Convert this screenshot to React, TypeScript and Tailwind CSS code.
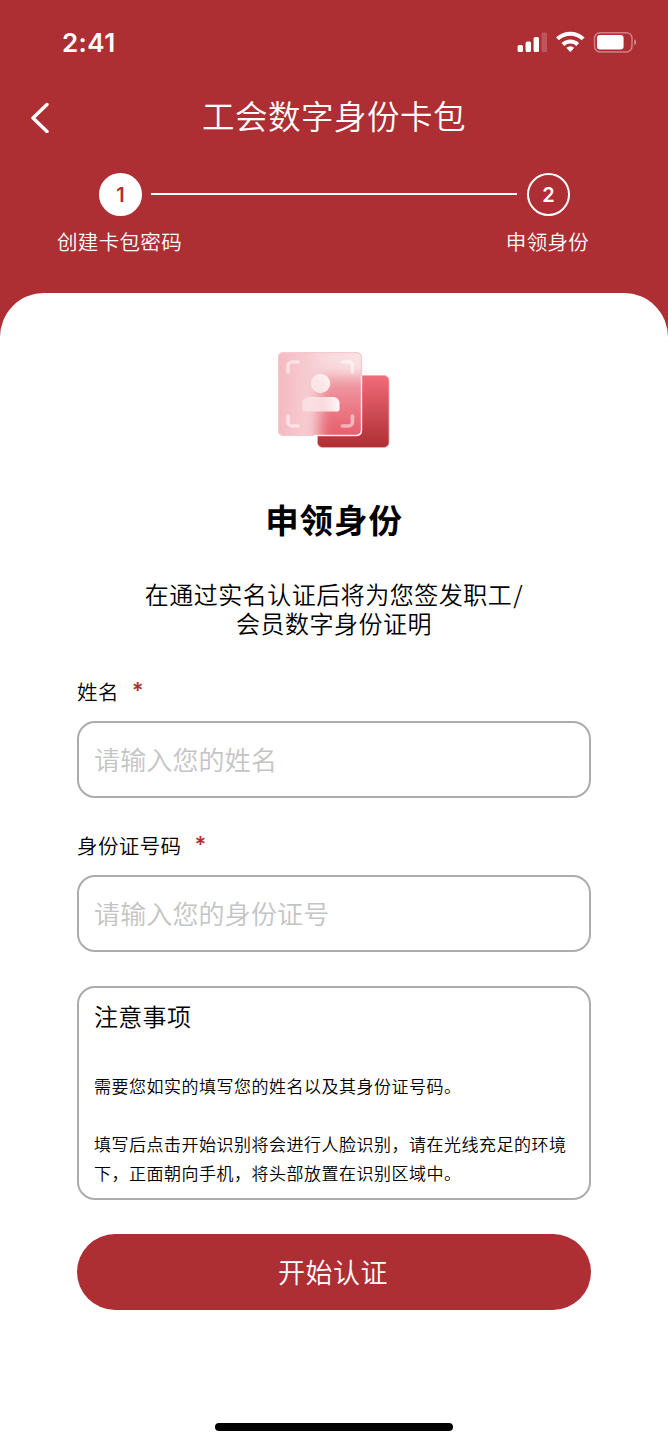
import { useState } from "react";

const steps = [
  { id: 1, label: "创建卡包密码", active: true },
  { id: 2, label: "申领身份", active: false },
];

function StatusBar() {
  return (
    <div className="h-[84px] flex items-center justify-between pl-[62px] pr-[31px] text-white">
      <span className="pt-px font-[Inter] font-semibold text-[26px] leading-none tracking-[0.4px]">2:41</span>
      <svg width="120" height="24" viewBox="0 0 120 24" fill="currentColor">
        <rect x="0.6" y="15" width="5.4" height="7" rx="1.5" />
        <rect x="8.6" y="11.5" width="5.4" height="10.5" rx="1.5" />
        <rect x="16.6" y="7" width="5.4" height="15" rx="1.5" />
        <rect x="24.6" y="2.4" width="5.4" height="19.6" rx="1.5" opacity="0.2" />
        <g fill="none" stroke="currentColor" strokeWidth="4.1">
          <path d="M40.5 8.9a18.3 18.3 0 0 1 25.6 0" />
          <path d="M45.9 14.4a10.7 10.7 0 0 1 14.8 0" />
        </g>
        <path d="M49.4 17.8a5.7 5.7 0 0 1 7.8 0l-3.2 3.7a1 1 0 0 1-1.4 0z" />
        <rect x="77.5" y="2.7" width="37.5" height="19.2" rx="5.6" fill="none" stroke="currentColor" strokeWidth="1.5" opacity="0.4" />
        <rect x="80" y="5.1" width="26.6" height="14.4" rx="3" />
        <path d="M117.3 9.2v6c2.3-.9 2.3-5.1 0-6z" opacity="0.5" />
      </svg>
    </div>
  );
}

// 身份卡片图标
function IdentityIcon() {
  return (
    <svg width="116" height="100" viewBox="0 0 116 100">
      <defs>
        <linearGradient id="back" x1="0" y1="0" x2="0" y2="1">
          <stop offset="0" stopColor="#f16c79" />
          <stop offset="1" stopColor="#ad2e33" />
        </linearGradient>
        <linearGradient id="glass" x1="0" y1="0" x2="1" y2="0">
          <stop offset="0" stopColor="#f4b9c1" />
          <stop offset="0.6" stopColor="#f8dadd" />
          <stop offset="1" stopColor="#f9e3e5" />
        </linearGradient>
        <linearGradient id="glow" x1="0" y1="0" x2="0" y2="1">
          <stop offset="0" stopColor="#f0a0a9" />
          <stop offset="0.7" stopColor="#e85f6d" />
        </linearGradient>
        <linearGradient id="person" x1="0" y1="0" x2="1" y2="0">
          <stop offset="0" stopColor="#fff" stopOpacity="0.3" />
          <stop offset="1" stopColor="#fff" stopOpacity="0.95" />
        </linearGradient>
        <linearGradient id="head" x1="0" y1="0" x2="1" y2="0">
          <stop offset="0" stopColor="#fff" stopOpacity="0.5" />
          <stop offset="1" stopColor="#fff" stopOpacity="0.85" />
        </linearGradient>
        <filter id="soft" x="-40%" y="-40%" width="180%" height="180%">
          <feGaussianBlur stdDeviation="7" />
        </filter>
        <clipPath id="card">
          <rect x="2" y="2" width="84" height="84" rx="5" />
        </clipPath>
      </defs>
      <rect x="41.5" y="25.5" width="71.5" height="72" rx="5" fill="url(#back)" stroke="#f4a9b0" strokeWidth="0.8" />
      <rect x="2" y="2" width="84" height="84" rx="5" fill="url(#glass)" />
      <g clipPath="url(#card)">
        <rect x="43" y="26" width="75" height="80" fill="url(#glow)" filter="url(#soft)" />
      </g>
      <rect x="2.7" y="2.7" width="82.8" height="82.8" rx="5" fill="none" stroke="#f7c9ce" strokeWidth="1.2" />
      <path d="M85.5 26v54.5a5 5 0 0 1-5 5H38" fill="none" stroke="#fff" strokeWidth="1.3" opacity="0.8" />
      <g fill="none" stroke="#fff" strokeOpacity="0.5" strokeWidth="3.6" strokeLinecap="round">
        <path d="M12 22v-6a4 4 0 0 1 4-4h6" />
        <path d="M66.5 12h6a4 4 0 0 1 4 4v6" />
        <path d="M12 66v6a4 4 0 0 0 4 4h6" />
        <path d="M66.5 76h6a4 4 0 0 0 4-4v-6" />
      </g>
      <circle cx="44.5" cy="33.5" r="9.7" fill="url(#head)" />
      <path d="M26 59.5v-6.5a6 6 0 0 1 6-6h25.5a6 6 0 0 1 6 6v6.5a2 2 0 0 1-2 2h-33.5a2 2 0 0 1-2-2z" fill="url(#person)" />
    </svg>
  );
}

type FieldProps = {
  label: string;
  placeholder: string;
  value: string;
  onChange: (value: string) => void;
};

function Field({ label, placeholder, value, onChange }: FieldProps) {
  return (
    <label className="block h-[154px]">
      <span className="h-[43px] flex items-start leading-[26px] text-[20.5px] tracking-[0.4px]">
        {label}
        <span className="ml-[13px] -mt-px font-[Inter] font-semibold text-[22px] tracking-normal text-[#ad2e33]">*</span>
      </span>
      <input
        value={value}
        onChange={(e) => onChange(e.target.value)}
        placeholder={placeholder}
        className="block w-full h-[77px] rounded-[18px] border-2 border-[#acacac] pl-[15px] pr-4 pb-[3px] text-[26px] font-[350] tracking-[0.15px] outline-none placeholder:text-[#c4c4c4]"
      />
    </label>
  );
}

export default function App() {
  const [name, setName] = useState("");
  const [idNumber, setIdNumber] = useState("");

  return (
    <div className="w-[668px] h-[1445px] bg-[#ad2e33] flex flex-col overflow-hidden font-['Noto_Sans_CJK_SC',sans-serif] font-[350]">
      <header className="h-[293px] shrink-0 text-white">
        <StatusBar />

        <div className="h-[66px] grid grid-cols-[80px_1fr_80px] items-center">
          <button className="pl-[29px]">
            <svg width="22" height="32" viewBox="0 0 22 32" fill="none" stroke="currentColor" strokeWidth="3.4" strokeLinecap="round" strokeLinejoin="round">
              <path d="M18 3.5 4 17 18 30.5" />
            </svg>
          </button>
          <h1 className="pb-[4px] text-center text-[32.5px] leading-none tracking-[0.5px]">工会数字身份卡包</h1>
        </div>

        <div className="pt-[23px] pl-[99px] pr-[98px] flex items-start justify-between">
          <Step {...steps[0]} />
          <div className="mt-[20px] mr-[1px] w-[366px] h-[2px] bg-white" />
          <Step {...steps[1]} />
        </div>
      </header>

      <main className="flex-1 bg-white rounded-t-[44px] flex flex-col items-center text-black">
        <div className="mt-[57px]">
          <IdentityIcon />
        </div>

        <h2 className="mt-[45px] font-bold text-[33.5px] leading-[48px] tracking-[0.9px]">申领身份</h2>
        <p className="mt-[36px] text-center text-[24px] leading-[29px] tracking-[0.5px]">
          在通过实名认证后将为您签发职工<span className="ml-px">/</span>
          <br />
          会员数字身份证明
        </p>

        <form className="mt-[41px] w-[514px]" onSubmit={(e) => e.preventDefault()}>
          <Field label="姓名" placeholder="请输入您的姓名" value={name} onChange={setName} />
          <Field label="身份证号码" placeholder="请输入您的身份证号" value={idNumber} onChange={setIdNumber} />

          <section className="h-[214px] rounded-[18px] border-2 border-[#acacac] pl-[15px] pt-[11px]">
            <h3 className="text-[24px] leading-[34px] tracking-[0.3px]">注意事项</h3>
            <p className="mt-[38px] text-[17px] leading-[29px] tracking-[0.5px] whitespace-nowrap">需要您如实的填写您的姓名以及其身份证号码。</p>
            <p className="mt-[29px] text-[17px] leading-[29px] tracking-[0.5px] whitespace-nowrap">
              填写后点击开始识别将会进行人脸识别，请在光线充足的环境
              <br />
              下，正面朝向手机，将头部放置在识别区域中。
            </p>
          </section>

          <button className="mt-[34px] pb-[2px] pr-[2px] w-full h-[76px] rounded-full bg-[#ad2e33] text-white text-[27px] leading-none tracking-[0.5px]">
            开始认证
          </button>
        </form>

        <div className="mt-auto mb-[14px] w-[238px] h-[8px] rounded-full bg-black" />
      </main>
    </div>
  );
}

function Step({ id, label, active }: { id: number; label: string; active: boolean }) {
  return (
    <div className="w-[43px] flex flex-col items-center">
      <span
        className={`size-[43px] shrink-0 rounded-full border-2 border-white flex items-center justify-center font-[Inter] font-semibold text-[20px] leading-none ${
          active ? "bg-white text-[#ad2e33]" : "text-white"
        }`}
      >
        {id}
      </span>
      <span className="mt-[10px] mr-[2px] whitespace-nowrap text-[20.5px] leading-[30px] tracking-[0.35px]">{label}</span>
    </div>
  );
}
